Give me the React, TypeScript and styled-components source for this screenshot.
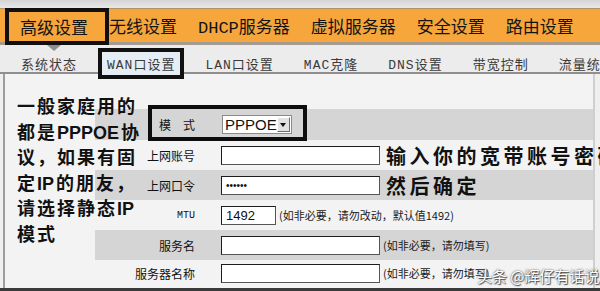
import styled, { createGlobalStyle, css } from 'styled-components';

const GlobalStyle = createGlobalStyle`
  html, body {
    margin: 0;
    padding: 0;
    background: #efefef;
  }
  body {
    font-family: "Noto Sans CJK SC", "Liberation Sans", sans-serif;
    overflow: hidden;
  }
`

const Page = styled.div`
  box-sizing: border-box;
  width: 600px;
  height: 291px;
  overflow: hidden;
  display: flex;
  flex-direction: column;
  background: #efefef;
  border-bottom: 3px solid #3a3a3a;
`

const TopStrip = styled.div`
  height: 8px;
  background: linear-gradient(#d4d4d4, #e8e8e8);
`

const NavBar = styled.div`
  height: 33px;
  display: flex;
  align-items: center;
  padding-left: 5px;
  background: #f7a63c;
  border-top: 1px solid #b4916a;
  border-bottom: 3px solid #a39a92;
  font-family: "Liberation Mono", "Noto Sans CJK SC", monospace;
  font-size: 17px;
  color: #141414;
  white-space: nowrap;
  position: relative;
  z-index: 2;
`

const NavItem = styled.div<{ $active?: boolean }>`
  position: relative;
  display: flex;
  align-items: center;
  ${p => p.$active ? css`
    align-self: flex-start;
    box-sizing: border-box;
    height: 37px;
    margin-top: -1px;
    padding: 0 17px 0 11px;
    border: 4px solid #101010;
  ` : css`
    margin-right: 21px;
  `}
`

const Pointer = styled.span`
  position: absolute;
  top: 33px;
  left: 38px;
  border-left: 7px solid transparent;
  border-right: 7px solid transparent;
  border-top: 6px solid #8e8e8e;
`

const SubNav = styled.div`
  box-sizing: border-box;
  height: 29px;
  padding: 9px 0 0 21px;
  display: flex;
  align-items: center;
  gap: 30px;
  background: #ececec;
  border-bottom: 2px solid #8f8f8f;
  font-family: "Liberation Mono", "Noto Sans CJK SC", monospace;
  font-size: 13px;
  letter-spacing: 1px;
  color: #3a3a3a;
  white-space: nowrap;
  position: relative;
  z-index: 1;
`

const SubItem = styled.div<{ $active?: boolean }>`
  ${p => p.$active && css`
    align-self: flex-start;
    box-sizing: border-box;
    height: 31px;
    margin: -6px -9px 0;
    padding: 0 5px;
    border: 4px solid #111;
    background: #e5edf5;
    display: flex;
    align-items: center;
  `}
`

const Content = styled.div`
  flex: 1;
  position: relative;
  margin: 0 5px 0 3px;
  padding-top: 35px;
  border-left: 2px solid #9d9d9d;
  border-right: 2px solid #cfcfcf;
  background: #f3f3f3;
`

const Form = styled.div`
  margin-left: 90px;
  display: flex;
  flex-direction: column;
`

const Row = styled.div<{ $shade?: boolean; $h?: number }>`
  position: relative;
  display: grid;
  grid-template-columns: 110px 1fr;
  height: ${p => p.$h ?? 30}px;
  background: ${p => (p.$shade ? '#d5d5d5' : 'transparent')};
`

const Label = styled.div<{ $mono?: boolean }>`
  display: flex;
  align-items: center;
  justify-content: flex-end;
  padding-right: 10px;
  font-size: ${p => (p.$mono ? '10px' : '12px')};
  font-family: ${p => (p.$mono ? '"Liberation Mono", monospace' : 'inherit')};
  color: #111;
  white-space: nowrap;
`

const Field = styled.div`
  display: flex;
  align-items: center;
  padding-left: 16px;
  min-width: 0;
  white-space: nowrap;
`

const TextBox = styled.input<{ $w?: number; $dots?: boolean }>`
  box-sizing: border-box;
  flex: none;
  width: ${p => p.$w ?? 159}px;
  height: 19px;
  margin: 0;
  padding: 0 4px;
  border: 1px solid #1c1c1c;
  border-right-color: #555;
  border-bottom-color: #555;
  background: #fff;
  font-family: "Liberation Sans", sans-serif;
  font-size: ${p => (p.$dots ? '10px' : '13px')};
  color: #111;
  outline: none;
`

const Select = styled.div`
  box-sizing: border-box;
  display: flex;
  align-items: center;
  width: 70px;
  height: 19px;
  margin-left: 1px;
  border: 1px solid #8a8a8a;
  background: #fff;
`

const SelectValue = styled.span`
  flex: 1;
  padding-left: 2px;
  font-family: "Liberation Sans", sans-serif;
  font-size: 15px;
  line-height: 17px;
  color: #111;
`

const SelectButton = styled.span`
  box-sizing: border-box;
  width: 14px;
  height: 15px;
  margin-right: 1px;
  border: 1px solid;
  border-color: #fff #6e6e6e #6e6e6e #fff;
  background: #e2e2e2;
  display: flex;
  align-items: center;
  justify-content: center;

  &::after {
    content: '';
    border-left: 3px solid transparent;
    border-right: 3px solid transparent;
    border-top: 4px solid #111;
  }
`

const Note = styled.span`
  margin-left: 3px;
  font-size: 11px;
  color: #1a1a1a;
`

const Shout = styled.span`
  margin-left: 6px;
  font-size: 20px;
  font-weight: 700;
  letter-spacing: 3.5px;
  color: #111;
`

const Highlight = styled.div`
  position: absolute;
  left: 53px;
  top: -4px;
  width: 159px;
  height: 36px;
  box-sizing: border-box;
  border: 4px solid #0d0d0d;
  pointer-events: none;
`

const Aside = styled.div`
  position: absolute;
  z-index: 2;
  left: 12px;
  top: 21px;
  font-family: "Liberation Sans", "Noto Sans CJK SC", sans-serif;
  font-size: 18px;
  font-weight: 700;
  line-height: 25.5px;
  letter-spacing: 2px;
  color: #111;
  white-space: nowrap;
`

const Latin = styled.span`
  letter-spacing: 0;
  margin-right: 2px;
`

const Watermark = styled.div`
  position: absolute;
  z-index: 2;
  left: 472px;
  top: 191px;
  font-size: 15px;
  color: #fff;
  white-space: nowrap;
  text-shadow: 0 0 2px #333, 1px 1px 1px #555;
`

const tabs = ['无线设置', 'DHCP服务器', '虚拟服务器', '安全设置', '路由设置'];
const subTabs = ['LAN口设置', 'MAC克隆', 'DNS设置', '带宽控制', '流量统计'];

export default function App() {
  return (
    <>
      <GlobalStyle />
      <Page>
        <TopStrip />
        <NavBar>
          <NavItem $active>
            高级设置
            <Pointer />
          </NavItem>
          {tabs.map(t => <NavItem key={t}>{t}</NavItem>)}
        </NavBar>
        <SubNav>
          <SubItem>系统状态</SubItem>
          <SubItem $active>WAN口设置</SubItem>
          {subTabs.map(t => <SubItem key={t}>{t}</SubItem>)}
        </SubNav>
        <Content>
          <Aside>
            <div>一般家庭用的</div>
            <div>都是<Latin>PPPOE</Latin>协</div>
            <div>议，如果有固</div>
            <div>定<Latin>IP</Latin>的朋友，</div>
            <div>请选择静态<Latin>IP</Latin></div>
            <div>模式</div>
          </Aside>
          <Form>
            <Row $shade $h={31}>
              <Label>模　式</Label>
              <Field>
                <Select>
                  <SelectValue>PPPOE</SelectValue>
                  <SelectButton />
                </Select>
              </Field>
              <Highlight />
            </Row>
            <Row>
              <Label>上网账号</Label>
              <Field>
                <TextBox readOnly value="" />
                <Shout>输入你的宽带账号密码</Shout>
              </Field>
            </Row>
            <Row $shade>
              <Label>上网口令</Label>
              <Field>
                <TextBox $dots readOnly value="••••••" />
                <Shout>然后确定</Shout>
              </Field>
            </Row>
            <Row>
              <Label $mono>MTU</Label>
              <Field>
                <TextBox $w={55} readOnly value="1492" />
                <Note>(如非必要，请勿改动，默认值1492)</Note>
              </Field>
            </Row>
            <Row $shade>
              <Label>服务名</Label>
              <Field>
                <TextBox readOnly value="" />
                <Note>(如非必要，请勿填写)</Note>
              </Field>
            </Row>
            <Row $h={26}>
              <Label>服务器名称</Label>
              <Field>
                <TextBox readOnly value="" />
                <Note>(如非必要，请勿填写)</Note>
              </Field>
            </Row>
          </Form>
          <Watermark>头条 @辉仔有话说</Watermark>
        </Content>
      </Page>
    </>
  );
}
